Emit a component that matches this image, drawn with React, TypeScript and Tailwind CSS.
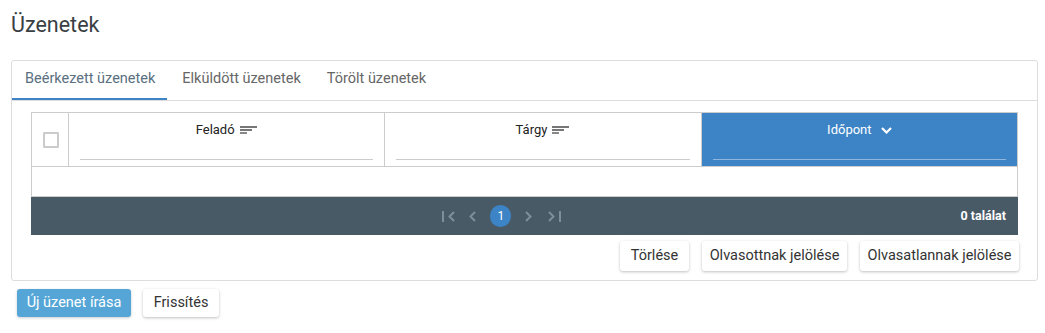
import React from 'react'

const SortIcon = () => (
  <svg width="18" height="9" viewBox="0 0 18 9" className="ml-[5px] shrink-0">
    <rect x="0" y="0" width="17" height="2" fill="#777" />
    <rect x="0" y="3" width="12" height="2" fill="#777" />
    <rect x="0" y="6" width="7" height="2" fill="#888" />
  </svg>
)

const PagerIcon = ({ d, w }: { d: string; w: number }) => (
  <svg width={w} height="11" viewBox={`0 0 ${w} 11`} className="shrink-0">
    <path d={d} fill="none" stroke="#7e8f99" strokeWidth="2" />
  </svg>
)

const ActionButton = ({ label, w }: { label: string; w: string }) => (
  <button
    className={`${w} h-[30px] rounded-[3px] bg-white text-[14.5px] text-[#333] shadow-[0_1px_3px_rgba(0,0,0,0.25)]`}
  >
    {label}
  </button>
)

function HeaderCell({ label, active }: { label: string; active?: boolean }) {
  return (
    <div
      className={
        active
          ? 'flex-1 flex flex-col bg-[#3d84c6]'
          : 'flex-1 flex flex-col border-r border-[#ccc]'
      }
    >
      <div className="pt-[9px] h-[25px] flex items-center justify-center">
        <span className={active ? 'text-[13px] leading-[16px] text-white' : 'text-[13px] leading-[16px] text-[#222]'}>
          {label}
        </span>
        {active ? (
          <svg width="11" height="7" viewBox="0 0 11 7" className="ml-[9px]">
            <path d="M1 1l4.5 4.5L10 1" fill="none" stroke="#fff" strokeWidth="2.2" />
          </svg>
        ) : (
          <SortIcon />
        )}
      </div>
      <div className={active ? 'mt-[21px] mx-[11px] h-px bg-[#8fb6de]' : 'mt-[21px] mx-[11px] h-px bg-[#ccc]'} />
    </div>
  )
}

export default function App() {
  return (
    <div className="w-[1045px] h-[333px] bg-white pl-[11px] pt-[11px] font-['Roboto',_'Liberation_Sans',_sans-serif]">
      <h1 className="text-[21.5px] leading-[28px] text-[#3a3f44] font-normal">Üzenetek</h1>

      <div className="mt-[21px] w-[1027px] rounded-[3px] border border-[#ddd] pb-[9px]">
        {/* Tabs */}
        <div className="flex border-b border-[#ddd] text-[14.5px]">
          <div className="pl-[13px] pr-[12px] pt-[8px] pb-[9px] leading-[20px] border-b-2 border-[#3d84c6] text-[#5a6f80]">
            Beérkezett üzenetek
          </div>
          <div className="ml-[2px] px-[13px] pt-[8px] pb-[9px] leading-[20px] border-b-2 border-transparent text-[#666]">
            Elküldött üzenetek
          </div>
          <div className="px-[13px] pt-[8px] pb-[9px] leading-[20px] border-b-2 border-transparent text-[#666]">
            Törölt üzenetek
          </div>
        </div>

        <div className="px-[19px] pt-[11px]">
          {/* Table */}
          <div className="border border-[#ccc]">
            <div className="flex h-[54px] border-b border-[#ccc]">
              <div className="w-[37px] shrink-0 border-r border-[#ccc] flex items-center justify-center">
                <div className="ml-[2px] w-[16px] h-[16px] border-2 border-[#cbcbcb] rounded-[1px] bg-white" />
              </div>
              <HeaderCell label="Feladó" />
              <HeaderCell label="Tárgy" />
              <HeaderCell label="Időpont" active />
            </div>
            <div className="h-[29px] bg-white" />
          </div>
          <div className="flex items-center h-[38px] bg-[#485a66] px-[12px]">
            <div className="flex-1 flex items-center justify-center">
              <PagerIcon w={13} d="M1 0v11M12 1L7.5 5.5 12 10" />
              <div className="ml-[13px]">
                <PagerIcon w={8} d="M7 1L2.5 5.5 7 10" />
              </div>
              <div className="ml-[14px] w-[21px] h-[22px] rounded-full bg-[#3d84c6] flex items-center justify-center text-[12px] text-white">
                1
              </div>
              <div className="ml-[14px]">
                <PagerIcon w={8} d="M1 1l4.5 4.5L1 10" />
              </div>
              <div className="ml-[15px]">
                <PagerIcon w={13} d="M1 1l4.5 4.5L1 10M12 0v11" />
              </div>
            </div>
            <div className="text-[12.5px] font-bold text-white">0 találat</div>
          </div>

          <div className="mt-[6px] flex justify-end gap-[13px] mr-[-1px]">
            <ActionButton label="Törlése" w="w-[69px]" />
            <ActionButton label="Olvasottnak jelölése" w="w-[145px]" />
            <ActionButton label="Olvasatlannak jelölése" w="w-[159px]" />
          </div>
        </div>
      </div>

      <div className="mt-[8px] ml-[6px] flex gap-[12px]">
        <button className="w-[114px] h-[28px] rounded-[3px] bg-[#55a6d6] text-[14.5px] text-white shadow-[0_1px_3px_rgba(0,0,0,0.2)]">
          Új üzenet írása
        </button>
        <button className="w-[76px] h-[28px] rounded-[3px] bg-white text-[14.5px] text-[#333] shadow-[0_1px_3px_rgba(0,0,0,0.25)]">
          Frissítés
        </button>
      </div>
    </div>
  )
}
